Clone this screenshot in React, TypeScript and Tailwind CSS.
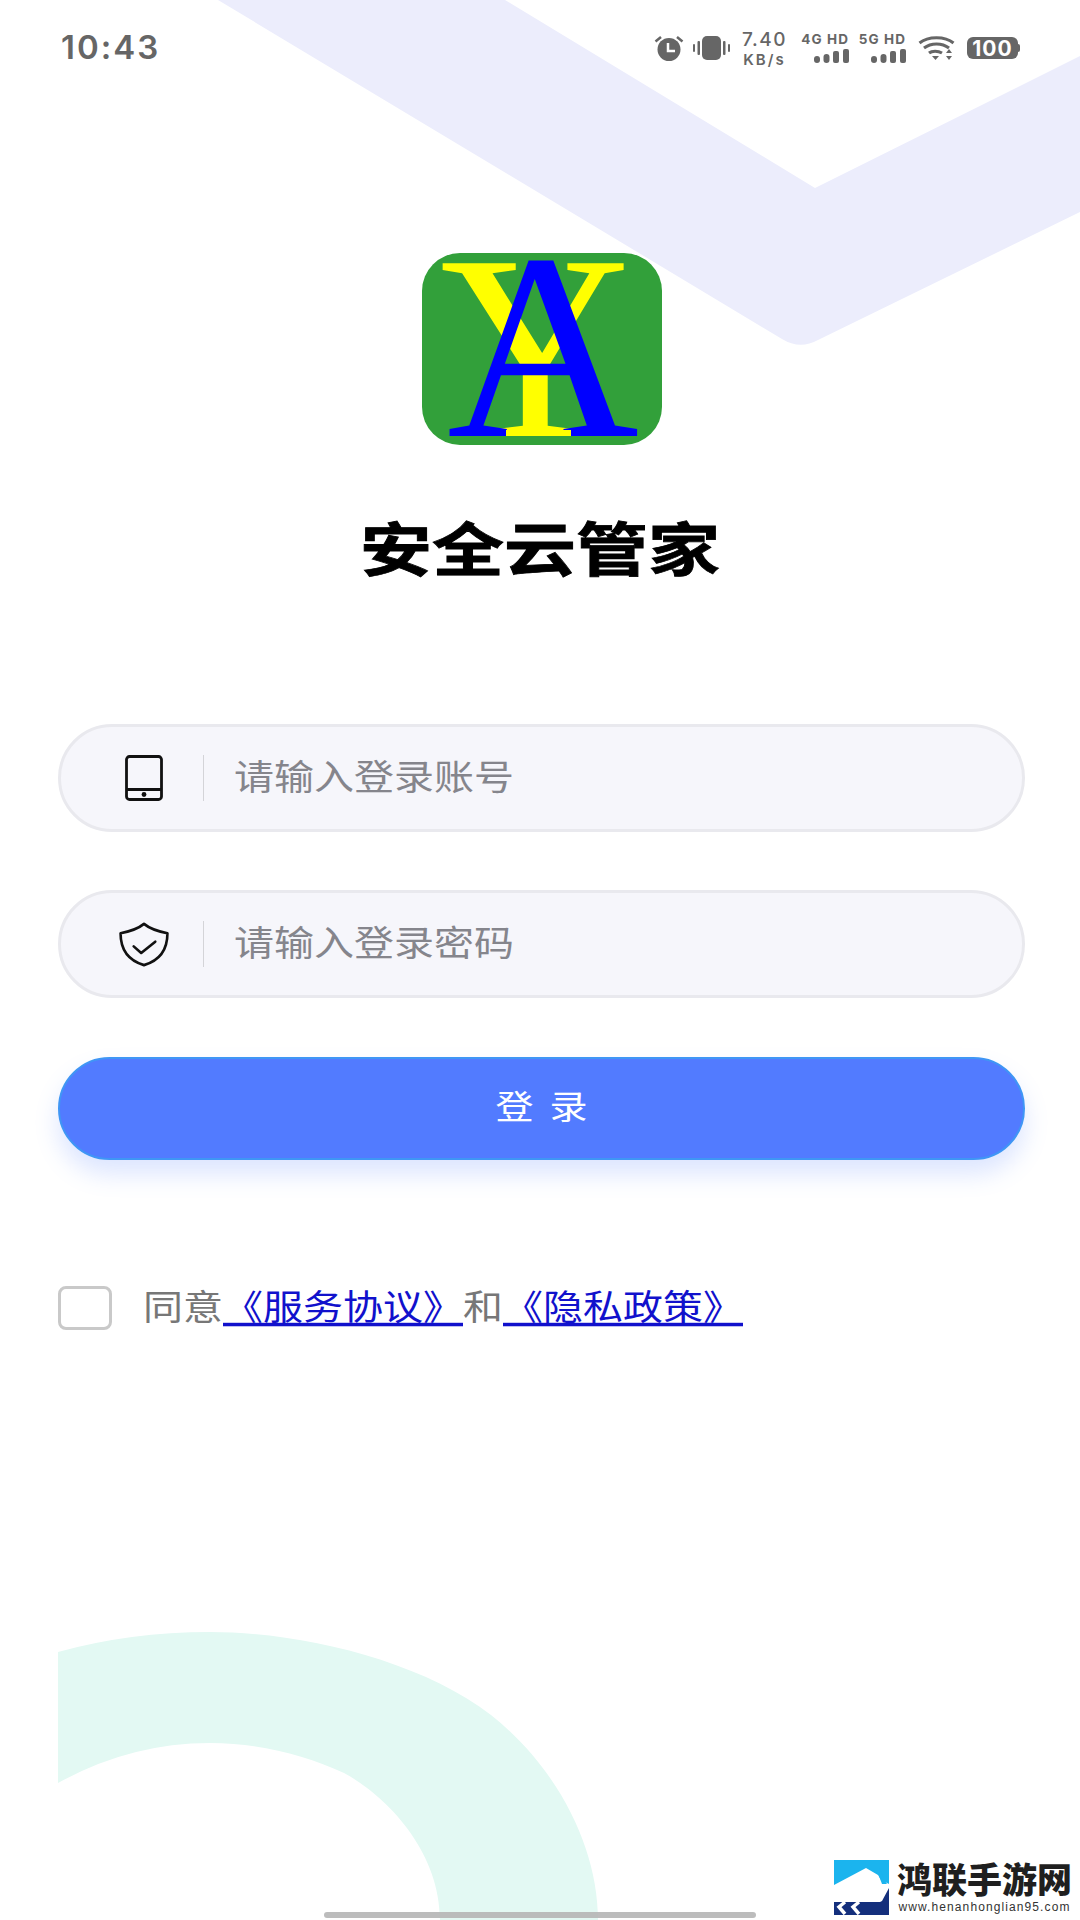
const FONT = "font-['Liberation_Sans','Noto_Sans_CJK_SC',sans-serif]";

function SignalBars() {
  return (
    <svg width="35" height="14" viewBox="0 0 35 14" fill="#666">
      <rect x="0" y="7" width="6" height="7" rx="3" />
      <rect x="9.5" y="5" width="6" height="9" rx="3" />
      <rect x="19" y="2" width="6" height="12" rx="2" />
      <rect x="29" y="0" width="6" height="14" rx="2" />
    </svg>
  );
}

function NetworkType({ label }: { label: string }) {
  return (
    <div className="flex w-[48px] flex-col items-end gap-[3px] font-['Inter',sans-serif] text-[13.5px] font-bold leading-none tracking-[1.1px]">
      <span className="whitespace-nowrap">{label}</span>
      <SignalBars />
    </div>
  );
}

function StatusBar() {
  return (
    <div className="flex h-[96px] items-center justify-between pl-[61px] pr-[60px] text-[#666]">
      <span className="font-['Inter',sans-serif] text-[33px] font-semibold tracking-[2px]">10:43</span>
      <div className="flex items-center">
        <svg width="30" height="26" viewBox="0 0 30 26" fill="#666">
          <circle cx="15" cy="14.5" r="11.5" />
          <path d="M1.5 6.5 L7 2 M28.5 6.5 L23 2" stroke="#666" strokeWidth="2.5" />
          <path d="M14 8 V16 H21" stroke="#fff" strokeWidth="2.5" fill="none" />
        </svg>
        <svg className="ml-[9px]" width="37" height="24" viewBox="0 0 37 24" fill="#666">
          <rect x="9" y="0" width="19" height="24" rx="5" />
          <rect x="0" y="8" width="2" height="8" rx="1" />
          <rect x="4.5" y="5" width="2.5" height="14" rx="1" />
          <rect x="30" y="5" width="2.5" height="14" rx="1" />
          <rect x="35" y="8" width="2" height="8" rx="1" />
        </svg>
        <div className="ml-[12px] flex w-[45px] flex-col items-center gap-[3px] whitespace-nowrap font-['Inter',sans-serif] leading-none">
          <span className="text-[19px] font-medium tracking-[1.5px]">7.40</span>
          <span className="text-[15px] font-semibold tracking-[2px]">KB/s</span>
        </div>
        <div className="ml-[14px]">
          <NetworkType label="4G HD" />
        </div>
        <div className="ml-[9px]">
          <NetworkType label="5G HD" />
        </div>
        <svg className="ml-[12px]" width="37" height="24" viewBox="0 0 37 24" fill="none" stroke="#666" strokeWidth="3">
          <path d="M1.5 7 C10 0 27 0 35.5 7" />
          <path d="M6 12 C13 6.5 24 6.5 31 12" />
          <path d="M11 17 C14 14.5 20 14.5 24 17" />
          <path d="M14 20 L21 20 L17.5 24 Z" fill="#666" stroke="none" />
          <path d="M28 17 L34 17 L31 13 Z M28 20 L34 20 L31 24 Z" fill="#666" stroke="none" />
        </svg>
        <div className="ml-[12px] flex items-center">
          <div className="flex h-[22px] w-[51px] items-center justify-center rounded-[6px] bg-[#666] font-['Inter',sans-serif] text-[21px] font-bold leading-none tracking-[1px] text-white">
            100
          </div>
          <div className="h-[8px] w-[2px] rounded-r bg-[#666]" />
        </div>
      </div>
    </div>
  );
}

function Logo() {
  return (
    <svg width="240" height="192" viewBox="0 0 240 192">
      <rect width="240" height="192" rx="38" fill="#32a03a" />
      <text x="113" y="183" textAnchor="middle" fontFamily="'Liberation Serif'" fontSize="264" fill="#ffff00">Y</text>
      <text x="121" y="183" textAnchor="middle" fontFamily="'Liberation Serif'" fontSize="266" fill="#0000ff">A</text>
      <rect x="84" y="177" width="65" height="6" fill="#ffff00" />
    </svg>
  );
}

function ShieldIcon() {
  return (
    <svg width="52" height="45" viewBox="0 0 54 48" fill="none" stroke="#111" strokeWidth="2.8" strokeLinejoin="round" strokeLinecap="round">
      <path d="M27 2 C33 7 42 10 52 12 C52 30 44 41 27 46 C10 41 2 30 2 12 C12 10 21 7 27 2 Z" />
      <path d="M16 26 L24 33 L39 21" />
    </svg>
  );
}

function TabletIcon() {
  return (
    <svg width="38" height="46" viewBox="0 0 38 46" fill="none" stroke="#111" strokeWidth="2.8">
      <rect x="1.5" y="1.5" width="35" height="43" rx="3" />
      <path d="M1.5 34.5 H36.5" />
      <circle cx="19" cy="39.5" r="2.4" fill="#111" stroke="none" />
    </svg>
  );
}

function LoginInput({ placeholder, icon }: { placeholder: string; icon: React.ReactNode }) {
  return (
    <div className="flex h-[108px] items-center rounded-full border-[3px] border-[#e9e9ee] bg-[#f6f6fb]">
      <div className="flex w-[142px] justify-center pl-[24px]">{icon}</div>
      <div className="h-[46px] w-[1px] bg-[#d4d4d8]" />
      <span className="ml-[30px] scale-y-[0.87] text-[40px] leading-none text-[#85858c]">{placeholder}</span>
    </div>
  );
}

function Watermark() {
  return (
    <div className="absolute bottom-[5px] right-[8px] flex items-center bg-white">
      <svg width="55" height="55" viewBox="0 0 55 55">
        <rect width="55" height="55" fill="#1bb4ee" />
        <path d="M0 25 L32 8 L44 15 L47 20 L55 24 V55 H0 Z" fill="#fff" />
        <path d="M46 8 L49 18 L53 24 L48 24 L45 16 Z" fill="#1bb4ee" />
        <path d="M0 42 H46 L48 41 L55 28 V55 H0 Z" fill="#142f7c" />
        <path d="M11 42 L5 47 L11 54 M25 42 L19 47 L25 54" stroke="#fff" strokeWidth="3.5" fill="none" />
        <path d="M0 36 H46 V42 H0 Z" fill="#fff" />
      </svg>
      <div className="ml-[8px] flex flex-col items-center">
        <span className="text-[35px] font-black leading-[38px] text-[#1f1f1f]">鸿联手游网</span>
        <span className="font-['Liberation_Sans',sans-serif] text-[12px] leading-[14px] tracking-[1.1px] text-[#333]">
          www.henanhonglian95.com
        </span>
      </div>
    </div>
  );
}

export default function App() {
  return (
    <div className={`relative h-[1920px] w-[1080px] overflow-hidden bg-white ${FONT}`}>
      <svg className="absolute left-0 top-0" width="1080" height="1920" viewBox="0 0 1080 1920">
        <path d="M218 0 H505 L815 188 L1080 56 V212 L818 340 Q800 350 782 339 Z" fill="#ecedfc" />
        <path
          d="M58 1652 Q130 1632 210 1632 C300 1632 420 1660 491 1715 C560 1770 598 1850 598 1920 H440 C440 1850 385 1795 344 1773 C305 1755 260 1743 210 1743 Q130 1743 58 1783 Z"
          fill="#e3f9f3"
        />
      </svg>

      <div className="relative flex flex-col">
        <StatusBar />
        <div className="mt-[157px] flex justify-center pl-[4px]">
          <Logo />
        </div>
        <h1 className="mt-[66px] scale-y-[0.8] text-center text-[72px] font-bold leading-[80px] text-black [-webkit-text-stroke:1px_black]">
          安全云管家
        </h1>

        <div className="mt-[133px] flex flex-col gap-[58px] pl-[58px] pr-[55px]">
          <LoginInput placeholder="请输入登录账号" icon={<TabletIcon />} />
          <LoginInput placeholder="请输入登录密码" icon={<ShieldIcon />} />
        </div>

        <div className="ml-[58px] mr-[55px] mt-[59px] flex h-[103px] items-center justify-center rounded-full border-[2px] border-[#3f96f5] bg-[#527bff] text-white shadow-[0_14px_24px_rgba(82,123,255,0.2)]">
          <span className="scale-y-[0.87] pl-[16px] text-[38px] tracking-[16px]">登录</span>
        </div>

        <div className="mt-[124px] flex items-center pl-[58px]">
          <div className="h-[44px] w-[54px] rounded-[8px] border-[3px] border-[#c9c9c9] bg-white" />
          <div className="ml-[31px] flex scale-y-[0.87] text-[40px] leading-[48px] text-[#777]">
            <span>同意</span>
            <span className="text-[#1111cc] underline underline-offset-[3px]">《服务协议》</span>
            <span>和</span>
            <span className="text-[#1111cc] underline underline-offset-[3px]">《隐私政策》</span>
          </div>
        </div>
      </div>

      <div className="absolute bottom-[2px] left-[324px] h-[6px] w-[432px] rounded-full bg-[#b5b5b5]/90" />
      <Watermark />
    </div>
  );
}
